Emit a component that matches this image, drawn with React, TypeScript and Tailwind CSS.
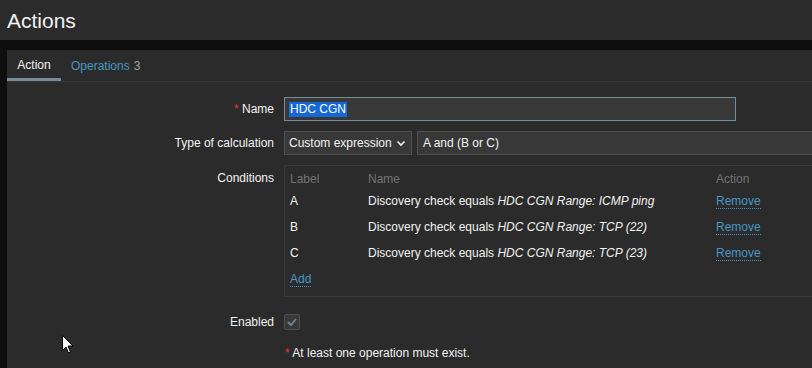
import React from 'react';

const conditions = [
    { label: 'A', name: 'ICMP ping' },
    { label: 'B', name: 'TCP (22)' },
    { label: 'C', name: 'TCP (23)' },
];

const FormRow: React.FC<{ label: React.ReactNode, children: React.ReactNode, top?: boolean }> = ({ label, children, top }) => (
    <div className={`flex flex-row ${top ? 'items-start' : 'items-center'}`}>
        <div className={`w-[277px] shrink-0 text-right pr-[10px] text-[#f2f2f2] ${top ? 'pt-[4px]' : ''}`}>{label}</div>
        <div className="flex-1 min-w-0">{children}</div>
    </div>
);

const App = () => {
    return (
        <div className="relative w-[812px] h-[368px] overflow-hidden bg-[#0e0e0e] text-[12px] text-[#f2f2f2]" style={{ fontFamily: '"Liberation Sans", Arial, sans-serif' }}>
            <div className="h-[40px] bg-[#2b2b2b] flex items-center pl-[7px]">
                <h1 className="text-[21px] leading-none text-[#f2f2f2]">Actions</h1>
            </div>
            <div className="pt-[10px] pl-[7px]">
                <div className="bg-[#2b2b2b] h-[330px]">
                    <div className="flex flex-row border-b border-[#383838] h-[32px]">
                        <div className="w-[54px] flex items-center justify-center border-b-[3px] border-[#768d99] pt-[2px]">Action</div>
                        <div className="flex items-center pl-[10px] pt-[1px] text-[#4796c4]">
                            Operations <span className="ml-[4px] text-[#9aa5ab]">3</span>
                        </div>
                    </div>
                    <div className="flex flex-col pt-[15px] gap-[10px]">
                        <FormRow label={<><span className="text-[#e33734]">*</span> Name</>}>
                            <div className="w-[452px] h-[24px] bg-[#383838] border border-[#768d99] flex items-center px-[4px]">
                                <span className="bg-[#1668d7] text-white px-[1px] leading-[15px]">HDC CGN</span>
                            </div>
                        </FormRow>
                        <FormRow label="Type of calculation">
                            <div className="flex flex-row gap-[5px]">
                                <div className="w-[128px] h-[24px] bg-[#383838] border border-[#4f4f4f] flex items-center justify-between px-[4px]">
                                    <span>Custom expression</span>
                                    <svg width="10" height="7" viewBox="0 0 10 7" className="mr-[1px]">
                                        <path d="M1.5 1.5 L5 5 L8.5 1.5" stroke="#f2f2f2" strokeWidth="1.6" fill="none" />
                                    </svg>
                                </div>
                                <div className="flex-1 h-[24px] bg-[#383838] border border-[#4f4f4f] border-r-0 flex items-center px-[5px]">
                                    A and (B or C)
                                </div>
                            </div>
                        </FormRow>
                        <FormRow label="Conditions" top>
                            <div className="h-[132px] border border-[#383838] border-r-0 px-[5px] pt-[4px]">
                                <table className="border-collapse">
                                    <thead>
                                        <tr className="h-[18px] text-[#737373]">
                                            <th className="w-[78px] text-left font-normal">Label</th>
                                            <th className="w-[348px] text-left font-normal">Name</th>
                                            <th className="text-left font-normal">Action</th>
                                        </tr>
                                    </thead>
                                    <tbody>
                                        {conditions.map((c, i) => (
                                            <tr key={i} className="h-[26px]">
                                                <td>{c.label}</td>
                                                <td>Discovery check equals <i>HDC CGN Range: {c.name}</i></td>
                                                <td>
                                                    <span className="text-[#4796c4] border-b border-dotted border-[#4796c4]">Remove</span>
                                                </td>
                                            </tr>
                                        ))}
                                        <tr className="h-[26px]">
                                            <td>
                                                <span className="text-[#4796c4] border-b border-dotted border-[#4796c4]">Add</span>
                                            </td>
                                            <td></td>
                                            <td></td>
                                        </tr>
                                    </tbody>
                                </table>
                            </div>
                        </FormRow>
                        <div className="pt-[6px]">
                            <FormRow label="Enabled">
                                <div className="w-[16px] h-[16px] bg-[#383838] border border-[#4f4f4f] rounded-[2px] flex items-center justify-center">
                                    <svg width="10" height="8" viewBox="0 0 10 8">
                                        <path d="M1 4 L4 7 L9 1" stroke="#6e8797" strokeWidth="1.8" fill="none" />
                                    </svg>
                                </div>
                            </FormRow>
                        </div>
                        <div className="pl-[278px] pt-[3px]">
                            <span className="text-[#e33734]">*</span> At least one operation must exist.
                        </div>
                    </div>
                </div>
            </div>
            <svg className="absolute left-[62px] top-[335px]" width="13" height="20" viewBox="0 0 13 20">
                <path d="M0.5 0.5 L0.5 15.5 L4 12 L6.5 18 L8.5 17 L6 11 L11 11 Z" fill="#ffffff" stroke="#000000" strokeWidth="1" />
            </svg>
        </div>
    );
};

export default App;
